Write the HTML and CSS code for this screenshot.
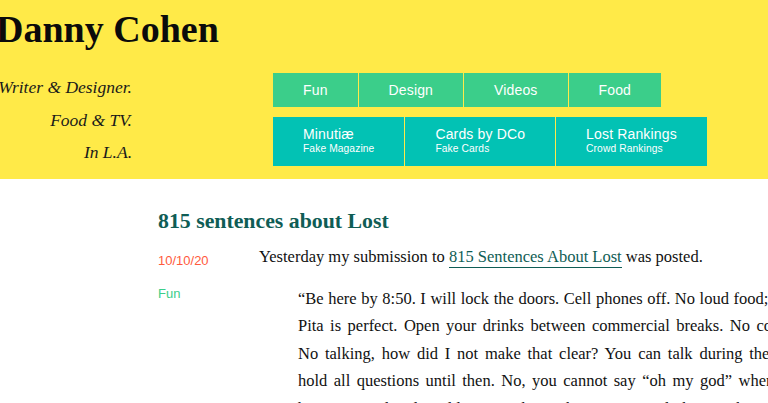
FILE: index.html
```html
<!DOCTYPE html>
<html lang="en">
<head>
<meta charset="utf-8">
<title>Danny Cohen</title>
<link rel="stylesheet" href="styles.css">
</head>
<body>
<header class="masthead">
  <h1 class="site-title">Danny Cohen</h1>
  <div class="masthead-row">
    <div class="tagline">
      <div class="tagline-line">Writer &amp; Designer.</div>
      <div class="tagline-line">Food &amp; TV.</div>
      <div class="tagline-line">In L.A.</div>
    </div>
    <nav class="nav">
      <ul class="nav-row nav-cats">
        <li><a href="#">Fun</a></li>
        <li><a href="#">Design</a></li>
        <li><a href="#">Videos</a></li>
        <li><a href="#">Food</a></li>
      </ul>
      <ul class="nav-row nav-projects">
        <li><a href="#"><span class="proj-name">Minutiæ</span><span class="proj-sub">Fake Magazine</span></a></li>
        <li><a href="#"><span class="proj-name">Cards by DCo</span><span class="proj-sub">Fake Cards</span></a></li>
        <li><a href="#"><span class="proj-name">Lost Rankings</span><span class="proj-sub">Crowd Rankings</span></a></li>
      </ul>
    </nav>
  </div>
</header>
<main class="post">
  <h2 class="post-title">815 sentences about Lost</h2>
  <div class="post-body">
    <aside class="post-meta">
      <div class="post-date">10/10/20</div>
      <div class="post-cat">Fun</div>
    </aside>
    <div class="post-content">
      <p>Yesterday my submission to <a href="#" class="inline-link">815 Sentences About Lost</a> was posted.</p>
      <blockquote class="quote">“Be here by 8:50. I will lock the doors. Cell phones off. No loud food; no chips.<br>Pita is perfect. Open your drinks between commercial breaks. No conversing.<br>No talking, how did I not make that clear? You can talk during the intro, so<br>hold all questions until then. No, you cannot say “oh my god” when the cast<br>because. I already told you. I have the remote and the snacks are mine.”</blockquote>
    </div>
  </div>
</main>
</body>
</html>
```

FILE: styles.css
```css
html, body {
  margin: 0;
  padding: 0;
  overflow: hidden;
  background: #ffffff;
}

body {
  font-family: "Liberation Serif", "Times New Roman", serif;
  color: #111111;
}

.masthead {
  background: #ffea48;
  height: 179px;
  padding-top: 8.5px;
  box-sizing: border-box;
}

.site-title {
  margin: 0 0 0 -4px;
  font-family: "Liberation Serif", serif;
  font-weight: 700;
  font-size: 38px;
  line-height: 40px;
  color: #0b0b0b;
}

.masthead-row {
  display: flex;
  margin-top: 24.5px;
}

.tagline {
  width: 132px;
  flex: none;
  display: flex;
  flex-direction: column;
  align-items: flex-end;
  font-style: italic;
  font-size: 17.5px;
  line-height: 32.5px;
  margin-top: -2px;
  color: #1a1a1a;
}

.tagline-line {
  white-space: nowrap;
}

.nav {
  margin-left: 141px;
  display: flex;
  flex-direction: column;
  gap: 10px;
}

.nav-row {
  list-style: none;
  margin: 0;
  padding: 0;
  display: flex;
  gap: 1px;
}

.nav-row a {
  display: block;
  color: #ffffff;
  text-decoration: none;
  font-family: "Liberation Sans", Arial, sans-serif;
  font-size: 14px;
  letter-spacing: 0.15px;
  padding: 0 30px;
}

.nav-cats a {
  background: #3bce8a;
  line-height: 34px;
  height: 34px;
}

.nav-projects a {
  background: #02c2b4;
  padding-top: 9px;
  padding-bottom: 10px;
  height: 30px;
}

.proj-name {
  display: block;
  line-height: 16px;
}

.proj-sub {
  display: block;
  font-size: 10.25px;
  letter-spacing: 0.1px;
  line-height: 14px;
}

.post {
  margin-left: 158px;
  padding-top: 30px;
}

.post-title {
  margin: 0;
  font-size: 21.8px;
  line-height: 24px;
  font-weight: 700;
  color: #0f5d55;
}

.post-body {
  display: grid;
  grid-template-columns: 101px 1fr;
  margin-top: 9.6px;
}

.post-meta {
  font-family: "Liberation Sans", Arial, sans-serif;
  font-size: 13px;
  line-height: 20px;
  padding-top: 8px;
}

.post-date {
  color: #ff5a3d;
}

.post-cat {
  color: #3bce8a;
  margin-top: 13.3px;
}

.post-content {
  font-size: 16.5px;
  line-height: 27.6px;
}

.post-content p {
  margin: 0;
  white-space: nowrap;
}

.inline-link {
  color: #0f5d55;
  text-decoration: none;
  border-bottom: 1px solid #0f5d55;
  padding-bottom: 1px;
}

.quote {
  margin: 14.4px 0 0 39px;
  width: 535px;
  text-align: justify;
  text-align-last: justify;
}
```
